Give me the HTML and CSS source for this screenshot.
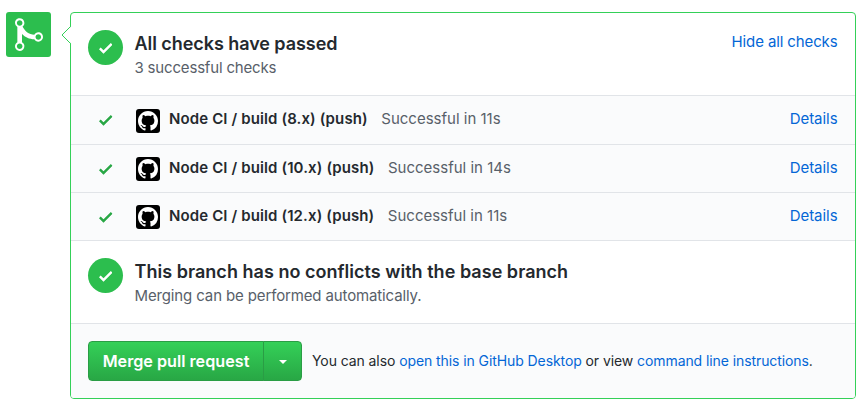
FILE: index.html
```html
<!DOCTYPE html>
<html lang="en">
<head>
<meta charset="utf-8">
<title>Merge pull request</title>
<link rel="stylesheet" href="styles.css">
</head>
<body>
<svg class="symbols" aria-hidden="true">
  <symbol id="check" viewBox="0 0 12 16"><path d="M12 5l-8 8-4-4 1.5-1.5L4 10l6.5-6.5L12 5z"/></symbol>
  <symbol id="mark" viewBox="0 0 16 16"><path d="M8 0C3.58 0 0 3.58 0 8c0 3.54 2.29 6.53 5.47 7.59.4.07.55-.17.55-.38 0-.19-.01-.82-.01-1.49-2.01.37-2.53-.49-2.69-.94-.09-.23-.48-.94-.82-1.13-.28-.15-.68-.52-.01-.53.63-.01 1.08.58 1.23.82.72 1.21 1.87.87 2.33.66.07-.52.28-.87.51-1.07-1.78-.2-3.64-.89-3.64-3.95 0-.87.31-1.59.82-2.15-.08-.2-.36-1.02.08-2.12 0 0 .67-.21 2.2.82.64-.18 1.32-.27 2-.27s1.36.09 2 .27c1.53-1.04 2.2-.82 2.2-.82.44 1.1.16 1.92.08 2.12.51.56.82 1.27.82 2.15 0 3.07-1.87 3.75-3.65 3.95.29.25.54.73.54 1.48 0 1.07-.01 1.93-.01 2.2 0 .21.15.46.55.38A8.01 8.01 0 0 0 16 8c0-4.42-3.58-8-8-8z"/></symbol>
</svg>
<main class="merge">
  <div class="badge">
    <svg class="merge-icon" viewBox="0 0 12 16"><path fill-rule="evenodd" d="M10 7c-.73 0-1.38.41-1.73 1.02V8C7.22 7.98 6 7.64 5.14 6.98c-.75-.58-1.5-1.61-1.89-2.44A1.993 1.993 0 0 0 2 .99C.89.99 0 1.89 0 3a2 2 0 0 0 1 1.72v6.56c-.59.35-1 .99-1 1.72 0 1.11.89 2 2 2a1.993 1.993 0 0 0 1-3.72V7.67c.67.7 1.44 1.27 2.3 1.69.86.42 2.03.63 2.97.64v-.02c.36.61 1 1.02 1.73 1.02 1.11 0 2-.89 2-2 0-1.11-.89-2-2-2zm-6.8 6c0 .66-.55 1.2-1.2 1.2-.65 0-1.2-.55-1.2-1.2 0-.65.55-1.2 1.2-1.2.65 0 1.2.55 1.2 1.2zM2 4.2C1.34 4.2.8 3.65.8 3c0-.65.55-1.2 1.2-1.2.65 0 1.2.55 1.2 1.2 0 .65-.55 1.2-1.2 1.2zm8 6c-.66 0-1.2-.55-1.2-1.2 0-.65.55-1.2 1.2-1.2.65 0 1.2.55 1.2 1.2 0 .65-.55 1.2-1.2 1.2z"/></svg>
  </div>
  <section class="panel">
    <svg class="caret" viewBox="0 0 10 18"><path class="caret-fill" d="M10 .5L1 9l9 8.500z"/><path class="caret-line" d="M9.500 .5L1 9l8.500 8.500"/></svg>
    <div class="status status-checks">
      <span class="circle"><svg class="check"><use href="#check"/></svg></span>
      <div class="status-text">
        <h2 class="heading heading-checks">All checks have passed</h2>
        <p class="sub sub-checks">3 successful checks</p>
      </div>
      <a class="link toggle">Hide all checks</a>
    </div>
    <ul class="runs">
      <li class="run run-first">
        <svg class="check run-check"><use href="#check"/></svg>
        <span class="avatar"><svg class="mark"><use href="#mark"/></svg></span>
        <strong class="name">Node CI / build (8.x) (push)</strong>
        <span class="result">Successful in 11s</span>
        <a class="link details">Details</a>
      </li>
      <li class="run">
        <svg class="check run-check"><use href="#check"/></svg>
        <span class="avatar"><svg class="mark"><use href="#mark"/></svg></span>
        <strong class="name">Node CI / build (10.x) (push)</strong>
        <span class="result">Successful in 14s</span>
        <a class="link details">Details</a>
      </li>
      <li class="run">
        <svg class="check run-check"><use href="#check"/></svg>
        <span class="avatar"><svg class="mark"><use href="#mark"/></svg></span>
        <strong class="name">Node CI / build (12.x) (push)</strong>
        <span class="result">Successful in 11s</span>
        <a class="link details">Details</a>
      </li>
    </ul>
    <div class="status status-branch">
      <span class="circle"><svg class="check"><use href="#check"/></svg></span>
      <div class="status-text">
        <h2 class="heading heading-branch">This branch has no conflicts with the base branch</h2>
        <p class="sub sub-branch">Merging can be performed automatically.</p>
      </div>
    </div>
    <div class="actions">
      <div class="buttons">
        <button class="btn btn-main"><span class="btn-label">Merge pull request</span></button>
        <button class="btn btn-more" aria-label="Select merge method"><span class="arrow"></span></button>
      </div>
      <p class="hint">You can also <a class="link">open this in GitHub Desktop</a> or view <a class="link">command line instructions</a>.</p>
    </div>
  </section>
</main>
</body>
</html>
```
FILE: styles.css
```css
* { box-sizing: border-box; }
body {
  margin: 0;
  background: #fff;
  color: #24292e;
  font-family: Inter, "Liberation Sans", sans-serif;
  font-size: 15px;
}
h2, p, ul { margin: 0; padding: 0; }
svg { display: block; flex: none; }
.symbols { display: none; }
.merge {
  display: flex;
  align-items: flex-start;
  gap: 19px;
  padding: 12px 11px 0 6px;
}
.badge {
  display: flex;
  justify-content: center;
  flex: none;
  width: 45px;
  height: 45px;
  padding-top: 4px;
  border-radius: 3px;
  background: #2cbe4e;
}
.merge-icon { width: 28px; height: 37.300px; fill: #fff; }
.panel {
  position: relative;
  flex: 1;
  height: 387px;
  border: 1px solid #34d058;
  border-radius: 4px;
}
.caret {
  position: absolute;
  left: -10px;
  top: 13px;
  width: 10px;
  height: 18px;
}
.caret-fill { fill: #fff; }
.caret-line { fill: none; stroke: #34d058; stroke-width: 1; }
.status {
  display: flex;
  align-items: flex-start;
  height: 82px;
  padding: 17px 17.500px 0 17px;
}
.circle {
  display: flex;
  align-items: center;
  justify-content: center;
  flex: none;
  width: 35px;
  height: 35px;
  border-radius: 50%;
  background: #2cbe4e;
  fill: #fff;
}
.check { width: 13.500px; height: 18px; }
.status-text { flex: 1; margin-left: 11.500px; }
.heading {
  width: max-content;
  font-size: 18px;
  font-weight: 600;
  line-height: 27px;
}
.heading-checks { letter-spacing: -.06px; }
.heading-branch { letter-spacing: .03px; }
.sub {
  width: max-content;
  color: #586069;
  line-height: 22px;
}
.sub-checks { letter-spacing: -.18px; }
.sub-branch { letter-spacing: -.13px; }
.link { color: #0366d6; }
.toggle { line-height: 24px; letter-spacing: -.12px; }
.runs {
  list-style: none;
  background: #fafbfc;
  border-bottom: 1px solid #e1e4e8;
}
.run {
  display: flex;
  align-items: flex-start;
  height: 48px;
  padding: 12px 17.500px 0 28px;
  border-top: 1px solid #e1e4e8;
  line-height: 22px;
}
.run-first { height: 49px; }
.run-check { margin-top: 2.500px; fill: #28a745; }
.avatar {
  display: flex;
  align-items: center;
  justify-content: center;
  flex: none;
  width: 24px;
  height: 24px;
  margin: 0 9px 0 23.500px;
  border-radius: 3px;
  background: #000;
}
.run-first .run-check { margin-top: 3px; }
.run-first .avatar { margin-top: 1px; }
.mark { width: 20px; height: 20px; fill: #fff; }
.name { font-weight: 600; letter-spacing: .12px; }
.result { margin-left: 13.500px; }
.result { color: #586069; }
.details { margin-left: auto; letter-spacing: -.05px; }
.actions {
  display: flex;
  align-items: flex-start;
  height: 75px;
  padding: 17px 17px 0;
  border-top: 1px solid #e1e4e8;
  border-radius: 0 0 3px 3px;
  background: #fafbfc;
}
.buttons { display: flex; flex: none; }
.btn {
  display: flex;
  align-items: center;
  justify-content: center;
  height: 40px;
  padding: 0;
  border: 1px solid #2a9d45;
  background: linear-gradient(#34d058, #28a745);
  color: #fff;
  font: 600 16.200px/24px Inter, "Liberation Sans", sans-serif;
}
.btn-main { width: 176px; border-radius: 4px 0 0 4px; }
.btn-more { width: 39px; margin-left: -1px; border-radius: 0 4px 4px 0; }
.arrow {
  border: 4.500px solid transparent;
  border-top-color: #fff;
  border-bottom: 0;
  margin-top: 2px;
}
.hint {
  margin-left: 10px;
  font-size: 14px;
  letter-spacing: -.085px;
  line-height: 40px;
  white-space: nowrap;
}
```
